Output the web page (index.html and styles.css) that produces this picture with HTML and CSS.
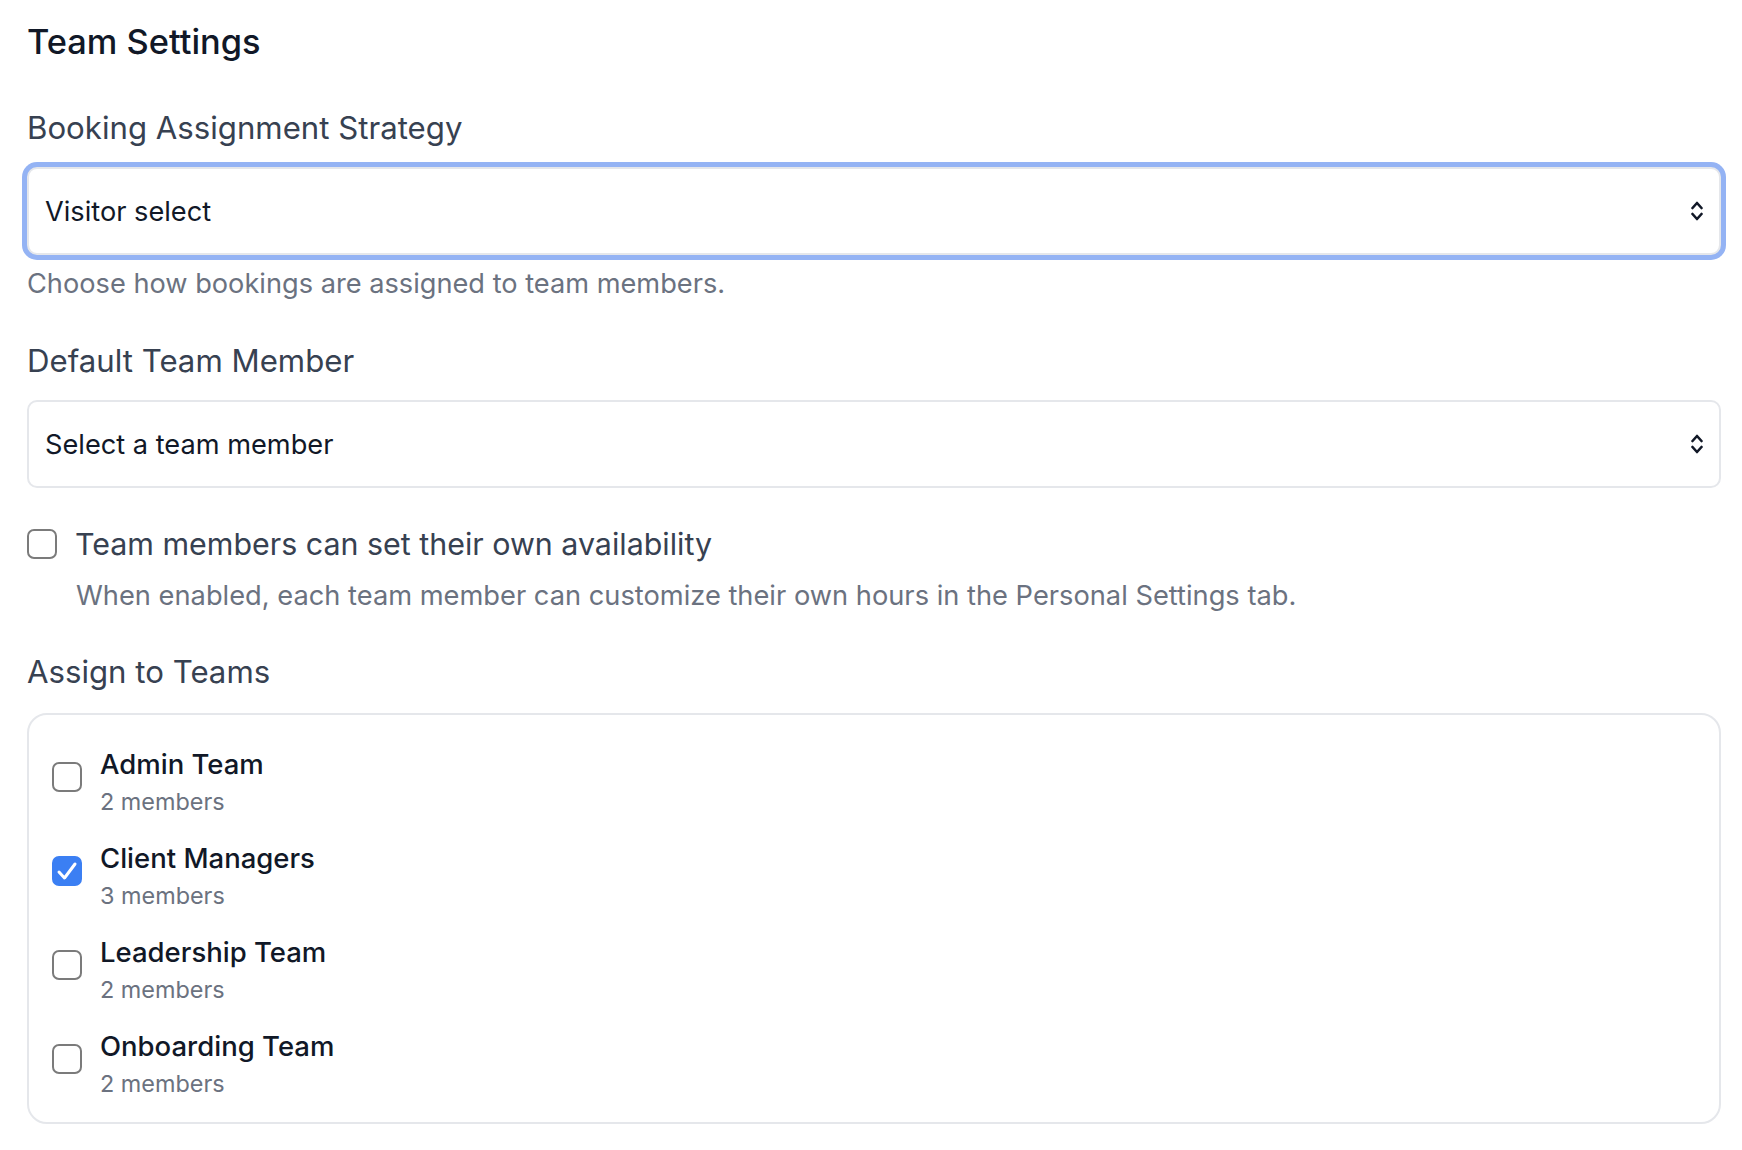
FILE: index.html
```html
<!DOCTYPE html>
<html lang="en">
<head>
  <meta charset="UTF-8">
  <meta name="viewport" content="width=device-width, initial-scale=1.0">
  <title>Team Settings</title>
  <link rel="stylesheet" href="styles.css">
</head>

<body>

  <div class="settings">
    <h2 class="title">Team Settings</h2>

    <div class="field">
      <label class="field-label">Booking Assignment Strategy</label>
      <div class="select focused">
        <span>Visitor select</span>
        <svg class="chevrons" width="12" height="22" viewBox="0 0 12 22" fill="none" stroke="currentColor" stroke-width="2.6" stroke-linecap="round" stroke-linejoin="round">
          <polyline points="1.5,8 6,3 10.5,8"></polyline>
          <polyline points="1.5,14 6,19 10.5,14"></polyline>
        </svg>
      </div>
      <p class="help">Choose how bookings are assigned to team members.</p>
    </div>

    <div class="field">
      <label class="field-label">Default Team Member</label>
      <div class="select">
        <span>Select a team member</span>
        <svg class="chevrons" width="12" height="22" viewBox="0 0 12 22" fill="none" stroke="currentColor" stroke-width="2.6" stroke-linecap="round" stroke-linejoin="round">
          <polyline points="1.5,8 6,3 10.5,8"></polyline>
          <polyline points="1.5,14 6,19 10.5,14"></polyline>
        </svg>
      </div>
    </div>

    <div class="option">
      <label class="option-row">
        <span class="box"></span>
        <span class="option-label">Team members can set their own availability</span>
      </label>
      <p class="option-desc">When enabled, each team member can customize their own hours in the Personal Settings tab.</p>
    </div>

    <div class="field">
      <label class="field-label">Assign to Teams</label>
      <div class="team-list">
        <label class="team">
          <span class="box"></span>
          <span class="team-info">
            <span class="team-name">Admin Team</span>
            <span class="team-count">2 members</span>
          </span>
        </label>
        <label class="team">
          <span class="box checked">
            <svg width="22" height="20" viewBox="0 0 22 20" fill="none" stroke="#fff" stroke-width="3" stroke-linecap="round" stroke-linejoin="round">
              <polyline points="3,11 8.5,17 19,3"></polyline>
            </svg>
          </span>
          <span class="team-info">
            <span class="team-name">Client Managers</span>
            <span class="team-count">3 members</span>
          </span>
        </label>
        <label class="team">
          <span class="box"></span>
          <span class="team-info">
            <span class="team-name">Leadership Team</span>
            <span class="team-count">2 members</span>
          </span>
        </label>
        <label class="team">
          <span class="box"></span>
          <span class="team-info">
            <span class="team-name">Onboarding Team</span>
            <span class="team-count">2 members</span>
          </span>
        </label>
      </div>
    </div>
  </div>

</body>
</html>
```

FILE: styles.css
```css
* {
  margin: 0;
  padding: 0;
  box-sizing: border-box;
}

body {
  background: #fff;
  font-family: 'Inter', 'Noto Sans', sans-serif;
  color: #111827;
  padding: 20px 21px 0 27px;
}

.title {
  font-size: 34.4px;
  font-weight: 500;
  line-height: 44px;
  color: #111827;
}

.field-label {
  display: block;
  font-size: 31.2px;
  font-weight: 400;
  line-height: 40px;
  color: #374151;
}

.field {
  margin-top: 44px;
}

.field + .field {
  margin-top: 37px;
}

.select {
  margin-top: 19px;
  height: 88px;
  border: 2px solid #e5e7eb;
  border-radius: 10px;
  padding: 0 16px 0 16px;
  display: flex;
  justify-content: space-between;
  align-items: center;
  font-size: 27.2px;
  color: #111827;
  background: #fff;
}

.select.focused {
  box-shadow: 0 0 0 5px #94b3f4;
}

.chevrons {
  color: #111827;
}

.help {
  margin-top: 9px;
  font-size: 27.2px;
  line-height: 40px;
  color: #6b7280;
}

/* availability toggle */
.option {
  margin-top: 36px;
}

.option-row {
  display: flex;
  align-items: center;
  gap: 18px;
}

.option-label {
  font-size: 30.4px;
  line-height: 40px;
  color: #374151;
}

.option-desc {
  margin-top: 12px;
  padding-left: 49px;
  font-size: 27.25px;
  line-height: 40px;
  color: #6b7280;
}

.option + .field {
  margin-top: 36px;
}

/* checkbox squares */
.box {
  flex-shrink: 0;
  width: 30px;
  height: 30px;
  border: 2.5px solid #7b7b7b;
  border-radius: 7px;
  background: #fff;
  display: flex;
  align-items: center;
  justify-content: center;
}

.box.checked {
  background: #3b7ff3;
  border-color: #3b7ff3;
}

/* team list card */
.team-list {
  margin-top: 21px;
  border: 2px solid #e5e7eb;
  border-radius: 20px;
  padding: 31px 23px 22px;
  display: flex;
  flex-direction: column;
  gap: 22px;
}

.team {
  display: flex;
  align-items: flex-start;
  gap: 18px;
}

.team .box {
  margin-top: 16px;
}

.team-info {
  display: flex;
  flex-direction: column;
}

.team-name {
  font-size: 27.5px;
  font-weight: 500;
  line-height: 36px;
  color: #111827;
}

.team-count {
  margin-top: 4px;
  font-size: 23.4px;
  line-height: 32px;
  color: #6b7280;
}
```
